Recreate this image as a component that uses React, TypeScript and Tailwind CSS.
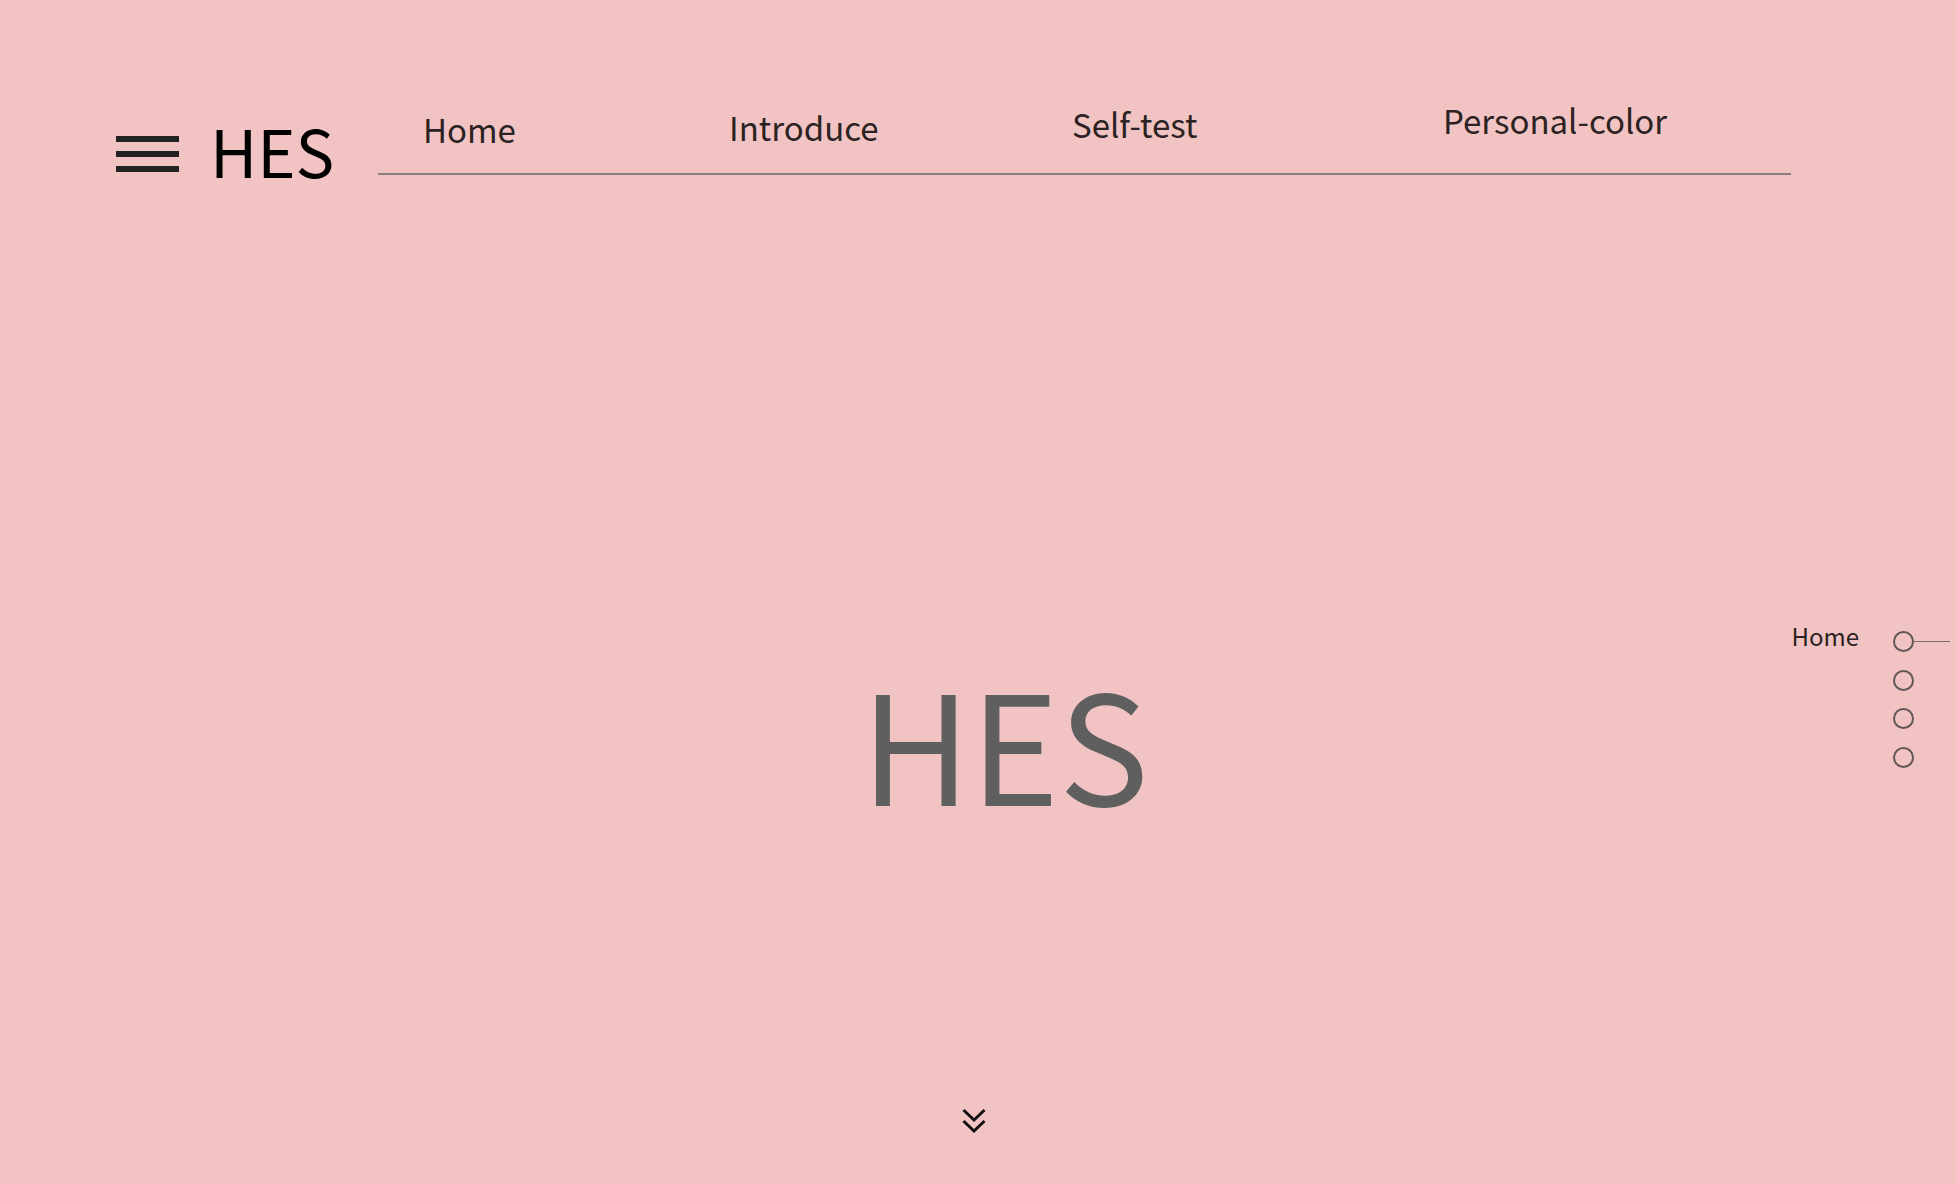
import { useState } from "react";

const font = { fontFamily: '"Noto Sans CJK KR", "Noto Sans", sans-serif' };

const menus = [
  { name: "Home", w: "w-[306px]", mb: "mb-[27px]" },
  { name: "Introduce", w: "w-[343px]", mb: "mb-[29px]" },
  { name: "Self-test", w: "w-[371px]", mb: "mb-[32px]" },
  { name: "Personal-color", w: "w-[300px]", mb: "mb-[36px]" },
];

export default function App() {
  const [page, setPage] = useState(0);

  return (
    <div
      className="relative h-[1184px] w-full overflow-hidden bg-[#f1c3c3]"
      style={font}
    >
      {/* header */}
      <header className="flex items-start pl-[116px]">
        <button className="mt-[136px] flex w-[63px] flex-col gap-[9px]">
          <span className="h-[6px] w-full bg-[#222]" />
          <span className="h-[6px] w-full bg-[#222]" />
          <span className="h-[6px] w-full bg-[#222]" />
        </button>
        <div className="mt-[118px] w-[199px] pl-[31px] text-[65px] leading-none text-black">
          HES
        </div>
        <nav className="mt-[100px] flex h-[75px] w-[1413px] items-end border-b-2 border-[#8a7e7e] pl-[45px]">
          {menus.map(m => (
            <a
              key={m.name}
              className={`${m.w} ${m.mb} text-[33px] leading-none text-[#2b2222]`}
            >
              {m.name}
            </a>
          ))}
        </nav>
      </header>

      {/* hero */}
      <main className="flex justify-center pl-[53px] pt-[482px]">
        <h1 className="text-[151px] leading-none tracking-[-0.5px] text-[#5f5f5f]">
          HES
        </h1>
      </main>

      <div className="mt-[292px] flex justify-center pr-[8px]">
        <svg width="24" height="26" viewBox="0 0 24 26" fill="none" stroke="#111" strokeWidth="3">
          <path d="M1.5 2 L12 12 L22.5 2" />
          <path d="M1.5 13 L12 23 L22.5 13" />
        </svg>
      </div>

      {/* side dots */}
      <div className="absolute right-0 top-[624px] flex items-start">
        <span className="mr-[34px] text-[24px] leading-none text-[#2b2222]">
          {["Home", "Introduce", "Self-test", "Personal-color"][page]}
        </span>
        <div className="flex flex-col gap-[17.5px] pt-[7px]">
          {[0, 1, 2, 3].map(i => (
            <div key={i} className="relative">
              <button
                onClick={() => setPage(i)}
                className="block h-[21px] w-[21px] rounded-full border-2 border-[#625656]"
              />
              {i === page && (
                <span className="absolute left-[20px] top-[9.5px] h-[1.5px] w-[37px] bg-[#7a7070]" />
              )}
            </div>
          ))}
        </div>
        <div className="w-[42px]" />
      </div>
    </div>
  );
}
